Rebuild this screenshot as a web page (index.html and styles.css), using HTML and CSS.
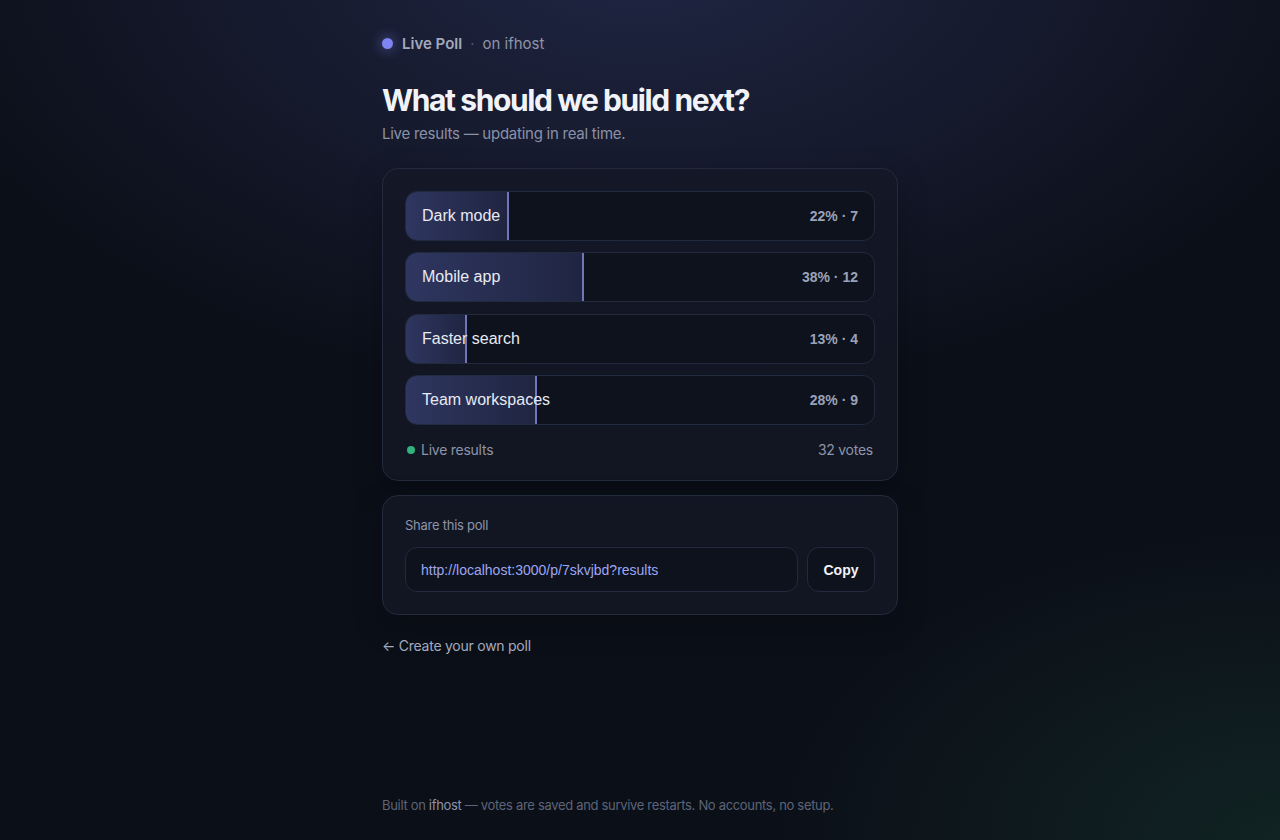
FILE: index.html
```html
<!DOCTYPE html>
<html lang="en">
<head>
    <meta charset="UTF-8">
    <meta name="viewport" content="width=device-width, initial-scale=1.0">
    <title>What should we build next? - Live Poll</title>
    <link rel="stylesheet" href="styles.css">
</head>
<body>
    <main class="page">
        <div class="brand">
            <span class="brand-dot"></span>
            <span class="brand-name">Live Poll</span>
            <span class="brand-sep">·</span>
            <span class="brand-host">on ifhost</span>
        </div>

        <h1 class="title">What should we build next?</h1>
        <p class="subtitle">Live results — updating in real time.</p>

        <section class="card results">
            <button class="option">
                <span class="option-fill" style="width: 22%"></span>
                <span class="option-label">Dark mode</span>
                <span class="option-count">22% · 7</span>
            </button>
            <button class="option">
                <span class="option-fill" style="width: 38%"></span>
                <span class="option-label">Mobile app</span>
                <span class="option-count">38% · 12</span>
            </button>
            <button class="option">
                <span class="option-fill" style="width: 13%"></span>
                <span class="option-label">Faster search</span>
                <span class="option-count">13% · 4</span>
            </button>
            <button class="option">
                <span class="option-fill" style="width: 28%"></span>
                <span class="option-label">Team workspaces</span>
                <span class="option-count">28% · 9</span>
            </button>

            <div class="results-footer">
                <span class="live"><span class="live-dot"></span>Live results</span>
                <span class="total">32 votes</span>
            </div>
        </section>

        <section class="card share">
            <div class="share-label">Share this poll</div>
            <div class="share-row">
                <input class="share-url" type="text" value="http://localhost:3000/p/7skvjbd?results" readonly>
                <button class="copy-btn" id="copyBtn">Copy</button>
            </div>
        </section>

        <a class="back-link" href="/">← Create your own poll</a>
    </main>

    <footer class="site-footer">
        Built on <span class="footer-host">ifhost</span> — votes are saved and survive restarts. No accounts, no setup.
    </footer>

    <script>
        document.getElementById('copyBtn').addEventListener('click', function() {
            const url = document.querySelector('.share-url').value;
            if (navigator.clipboard) {
                navigator.clipboard.writeText(url);
            }
            this.textContent = 'Copied';
            setTimeout(() => { this.textContent = 'Copy'; }, 1500);
        });
    </script>
</body>
</html>
```

FILE: styles.css
```css
* {
    box-sizing: border-box;
}
html, body {
    height: 100%;
}
body {
    font-family: Inter, "Noto Sans", sans-serif;
    letter-spacing: -0.25px;
    margin: 0;
    color: #e6e8f0;
    background-color: #0b0f18;
    background-image:
        radial-gradient(ellipse 760px 460px at 50% -60px, rgba(40, 46, 84, 0.75), rgba(40, 46, 84, 0) 100%),
        radial-gradient(ellipse 520px 320px at 100% 100%, rgba(22, 52, 44, 0.55), rgba(22, 52, 44, 0) 100%);
    display: flex;
    flex-direction: column;
    min-height: 100vh;
}
.page {
    width: 516px;
    margin: 0 auto;
    padding-top: 33px;
}

/* top brand line */
.brand {
    display: flex;
    align-items: center;
    font-size: 15px;
    height: 20px;
    letter-spacing: 0;
}
.brand-dot {
    width: 11px;
    height: 11px;
    border-radius: 50%;
    background: #8083f2;
    box-shadow: 0 0 12px 3px rgba(128, 131, 242, 0.3);
    margin-right: 9px;
}
.brand-name {
    font-weight: 600;
    color: #a3a9bd;
}
.brand-sep {
    color: #4c5367;
    margin: 0 8px;
}
.brand-host {
    color: #8e95a9;
}

.title {
    font-size: 30px;
    font-weight: 700;
    letter-spacing: -1.4px;
    color: #f1f3f8;
    margin: 28px 0 0;
    line-height: 38px;
}
.subtitle {
    font-size: 15px;
    color: #8a91a6;
    margin: 5px 0 0;
    line-height: 20px;
}

.card {
    background: rgba(20, 24, 38, 0.85);
    border: 1px solid #232a3d;
    border-radius: 16px;
    box-shadow: 0 10px 30px rgba(0, 0, 0, 0.25);
}
.results {
    margin-top: 24px;
    padding: 22px 22px 22px;
    display: flex;
    flex-direction: column;
    gap: 11.3px;
}

/* each option row is a vote button with its share drawn behind the label */
.option {
    position: relative;
    height: 50px;
    border: 1px solid #222a3e;
    border-radius: 12px;
    background: #0d121d;
    overflow: hidden;
    display: flex;
    align-items: center;
    justify-content: space-between;
    padding: 0 16px;
    font-family: "Liberation Sans", Arial, sans-serif;
    letter-spacing: 0;
    cursor: pointer;
    text-align: left;
}
.option-fill {
    position: absolute;
    left: 0;
    top: 0;
    bottom: 0;
    background: linear-gradient(90deg, #2f3660, #1f2541);
    border-right: 2px solid #7276b8;
}
.option-label {
    position: relative;
    font-size: 16px;
    color: #e8eaf2;
}
.option-count {
    position: relative;
    font-size: 14px;
    font-weight: 700;
    color: #9ba2b8;
}

.results-footer {
    display: flex;
    justify-content: space-between;
    align-items: center;
    font-size: 14px;
    color: #8d94a8;
    padding: 0 2px;
    margin-top: 5px;
}
.live {
    display: flex;
    align-items: center;
}
.live-dot {
    width: 8px;
    height: 8px;
    border-radius: 50%;
    background: #2fb27e;
    margin-right: 6px;
}

.share {
    margin-top: 14px;
    padding: 21px 22px 22px;
}
.share-label {
    font-size: 13px;
    color: #8d94a8;
    line-height: 16px;
}
.share-row {
    display: flex;
    gap: 9px;
    margin-top: 14px;
}
.share-url {
    flex: 1;
    height: 45px;
    padding: 0 15px;
    border: 1px solid #232a3e;
    border-radius: 12px;
    background: #0d121d;
    color: #9ea6f2;
    font-family: "Liberation Sans", Arial, sans-serif;
    font-size: 14px;
    outline: none;
}
.copy-btn {
    width: 68px;
    height: 45px;
    border: 1px solid #232a3e;
    border-radius: 12px;
    background: #0d121d;
    color: #f1f3f8;
    font-family: "Liberation Sans", Arial, sans-serif;
    font-size: 14px;
    font-weight: 700;
    cursor: pointer;
}

.back-link {
    display: inline-block;
    margin-top: 22px;
    font-size: 14px;
    color: #a4aabd;
    text-decoration: none;
}

.site-footer {
    width: 516px;
    margin: auto auto 0;
    padding-bottom: 27px;
    font-size: 13px;
    letter-spacing: -0.32px;
    color: #5d6477;
}
.footer-host {
    color: #8d94a8;
}
```
